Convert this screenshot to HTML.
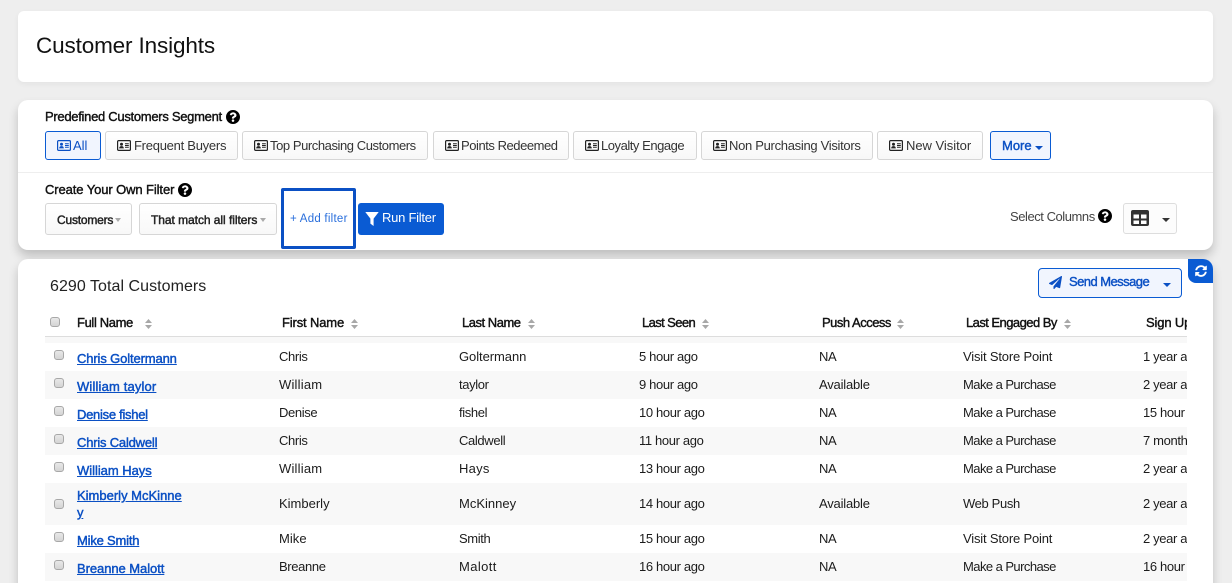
<!DOCTYPE html>
<html><head><meta charset="utf-8"><title>Customer Insights</title>
<style>
html,body{margin:0;padding:0;width:1232px;height:583px;overflow:hidden;background:#eee}
body{font-family:"Liberation Sans",Arial,sans-serif;color:#222;position:relative;font-size:13px}
.card{position:absolute;left:18px;width:1195px;background:#fff;border-radius:6px}
.t{position:absolute;white-space:nowrap;line-height:16px}
.m{-webkit-text-stroke:.4px currentColor}
.btn{position:absolute;box-sizing:border-box;top:131px;height:29px;border:1px solid #d6d6d6;border-radius:3px;background:linear-gradient(#fff,#f8f8f8);white-space:nowrap;line-height:27px;font-size:13px;color:#333}
.btn svg{position:absolute;left:11px;top:8px;width:14px;height:11px}
.btn span{position:absolute;top:0}
.on{border-color:#0a5bd3;background:#f1f5fe;color:#0b50c4}
.sel{position:absolute;box-sizing:border-box;top:203px;height:32px;border:1px solid #d6d6d6;border-radius:3px;background:linear-gradient(#fff,#f8f8f8);font-size:12px;line-height:33px;color:#222;white-space:nowrap;-webkit-text-stroke:.45px #222}
.caret{position:absolute;width:0;height:0;border-left:4px solid transparent;border-right:4px solid transparent;border-top:4px solid #333}
.sc{border-left-width:3.5px;border-right-width:3.5px;border-top-color:#aaa}
.h{position:absolute;top:315px;font-size:13px;line-height:16px;white-space:nowrap;color:#111;letter-spacing:-.15px;-webkit-text-stroke:.4px #111}
.h svg{position:absolute;top:4px;width:7px;height:10px}
.wrap{position:absolute;left:45px;top:310px;width:1142px;height:273px;overflow:hidden}
.r{position:absolute;left:0;width:1142px}
.g{background:#f8f8f8}
.c{position:absolute;white-space:nowrap;font-size:13px;line-height:16px;color:#1c1c1c;letter-spacing:-.36px;top:6px}
.a{position:absolute;left:32px;white-space:nowrap;font-size:13px;line-height:16px;color:#0b50c4;text-decoration:underline;letter-spacing:-.2px;-webkit-text-stroke:.45px #0b50c4;top:8px}
.cb{position:absolute;left:9px;box-sizing:border-box;width:10px;height:10px;border:1px solid #a8a8a8;border-radius:3px;background:linear-gradient(#e8e8e8,#d4d4d4);top:7px}
.q{position:absolute;width:14px;height:14px}
.c1{left:234px}.c2{left:414px}.c3{left:594px}.c4{left:774px}.c5{left:918px}.c6{left:1098px}
.mp{letter-spacing:-.56px}.vs{letter-spacing:-.18px}
</style></head><body>
<svg width="0" height="0" style="position:absolute">
<symbol id="id" viewBox="0 0 14 11"><rect x=".6" y=".6" width="12.8" height="9.8" rx="1" fill="none" stroke="currentColor" stroke-width="1.2"/><circle cx="4.5" cy="4.2" r="1.5" fill="currentColor"/><path d="M2.2 8.4c0-1.7 1-2.3 2.300-2.300s2.300.6 2.300 2.300z" fill="currentColor"/><path d="M8 3.800h3.800M8 5.500h3.800M8 7.200h3.800" stroke="currentColor" stroke-width="1"/></symbol>
<symbol id="q" viewBox="8 8 496 496"><path fill="#000" d="M504 256c0 136.997-111.043 248-248 248S8 392.997 8 256C8 119.083 119.043 8 256 8s248 111.083 248 248zM262.655 90c-54.497 0-89.255 22.957-116.549 63.758-3.536 5.286-2.353 12.415 2.715 16.258l34.699 26.31c5.205 3.947 12.621 3.008 16.665-2.122 17.864-22.658 30.113-35.797 57.303-35.797 20.429 0 45.698 13.148 45.698 32.958 0 14.976-12.363 22.667-32.534 33.976C247.128 238.528 216 254.941 216 296v4c0 6.627 5.373 12 12 12h56c6.627 0 12-5.373 12-12v-1.333c0-28.462 83.186-29.647 83.186-106.667 0-58.002-60.165-102-116.531-102zM256 338c-25.365 0-46 20.635-46 46 0 25.364 20.635 46 46 46s46-20.636 46-46c0-25.365-20.635-46-46-46z"/></symbol>
<symbol id="s" viewBox="0 0 7 10"><path d="M3.500 0L7 4H0zM3.500 10L0 6h7z" fill="#a8a8a8"/></symbol>
</svg>

<div class="card" style="top:11px;height:71px;box-shadow:0 2px 6px rgba(0,0,0,.05)"></div>
<div class="t" style="left:36px;top:32px;font-size:22.5px;line-height:28px;color:#111;letter-spacing:-.14px">Customer Insights</div>

<div class="card" style="top:100px;height:150px;border-radius:10px;box-shadow:0 6px 10px rgba(0,0,0,.2)"></div>
<div style="position:absolute;left:18px;top:172px;width:1195px;height:1px;background:#eee"></div>
<div class="t m" style="left:45px;top:109px;font-size:13px;color:#111;letter-spacing:-.29px">Predefined Customers Segment</div>
<svg class="q" style="left:226px;top:110px"><use href="#q"/></svg>

<div class="btn on" style="left:45px;width:56px"><svg style="color:#0b50c4"><use href="#id"/></svg><span style="left:27px">All</span></div>
<div class="btn" style="left:105px;width:133px"><svg style="color:#222"><use href="#id"/></svg><span style="left:28px;letter-spacing:-.26px">Frequent Buyers</span></div>
<div class="btn" style="left:242px;width:186px"><svg style="color:#222"><use href="#id"/></svg><span style="left:27px;letter-spacing:-.43px">Top Purchasing Customers</span></div>
<div class="btn" style="left:433px;width:136px"><svg style="color:#222"><use href="#id"/></svg><span style="left:27px;letter-spacing:-.45px">Points Redeemed</span></div>
<div class="btn" style="left:573px;width:124px"><svg style="color:#222"><use href="#id"/></svg><span style="left:27px;letter-spacing:-.46px">Loyalty Engage</span></div>
<div class="btn" style="left:701px;width:172px"><svg style="color:#222"><use href="#id"/></svg><span style="left:27px;letter-spacing:-.3px">Non Purchasing Visitors</span></div>
<div class="btn" style="left:877px;width:106px"><svg style="color:#222"><use href="#id"/></svg><span style="left:28px;letter-spacing:-.03px">New Visitor</span></div>
<div class="btn on m" style="left:990px;width:61px"><span style="left:11px">More</span><i class="caret" style="left:44px;top:14px;border-top-color:#0b50c4"></i></div>

<div class="t m" style="left:45px;top:182px;font-size:13px;color:#111;letter-spacing:-.1px">Create Your Own Filter</div>
<svg class="q" style="left:178px;top:183px"><use href="#q"/></svg>
<div class="sel" style="left:45px;width:87px"><span style="position:absolute;left:11px;letter-spacing:-.2px">Customers</span><i class="caret sc" style="left:69px;top:14px"></i></div>
<div class="sel" style="left:139px;width:138px"><span style="position:absolute;left:11px;letter-spacing:-.05px">That match all filters</span><i class="caret sc" style="left:120px;top:14px"></i></div>
<div style="position:absolute;box-sizing:border-box;left:281px;top:188px;width:75px;height:61px;border:3px solid #0b50c4;border-radius:2px;background:#fff"></div>
<div class="t" style="left:290px;top:211px;font-size:11.5px;color:#2a6fdc;letter-spacing:.25px">+ Add filter</div>
<div style="position:absolute;left:358px;top:203px;width:86px;height:32px;background:#0a5bd3;border-radius:3px"></div>
<svg style="position:absolute;left:365px;top:212px" width="14" height="14" viewBox="0 0 14 14"><path d="M.3 0h13.400L8.600 6.600V14L5.400 11.600V6.600z" fill="#fff"/></svg>
<div class="t" style="left:382px;top:210px;font-size:13px;color:#fff;letter-spacing:-.25px">Run Filter</div>

<div class="t" style="left:1010px;top:209px;font-size:13px;color:#444;letter-spacing:-.45px">Select Columns</div>
<svg class="q" style="left:1098px;top:209px"><use href="#q"/></svg>
<div style="position:absolute;box-sizing:border-box;left:1123px;top:203px;width:54px;height:31px;border:1px solid #ddd;border-radius:3px;background:#fcfcfc"></div>
<svg style="position:absolute;left:1131px;top:210px" width="18" height="16" viewBox="0 0 18 16"><rect width="18" height="16" rx="2" fill="#333"/><rect x="2.500" y="4.500" width="5.500" height="4" fill="#fff"/><rect x="10" y="4.500" width="5.500" height="4" fill="#fff"/><rect x="2.500" y="10.500" width="5.500" height="3.500" fill="#fff"/><rect x="10" y="10.500" width="5.500" height="3.500" fill="#fff"/></svg>
<i class="caret" style="left:1162px;top:218px"></i>

<div class="card" style="top:259px;height:340px;box-shadow:0 6px 10px rgba(0,0,0,.2);border-radius:10px 10px 0 0"></div>
<div class="t" style="left:50px;top:278px;font-size:16px;line-height:18px;color:#222;letter-spacing:.05px">6290 Total Customers</div>
<div style="position:absolute;box-sizing:border-box;left:1038px;top:268px;width:144px;height:30px;border:1px solid #0a5bd3;border-radius:4px;background:#f1f5fe"></div>
<svg style="position:absolute;left:1049px;top:276px" width="13" height="13" viewBox="0 0 512 512"><path fill="#0b50c4" d="M476 3.200L12.500 270.600c-18.100 10.400-15.800 35.600 2.200 43.200L121 358.400l287.300-253.200c5.500-4.900 13.300 2.600 8.600 8.300L176 407v80.500c0 23.600 28.500 32.900 42.500 15.800L282 426l124.600 52.200c14.200 6 30.400-2.900 33-18.200l72-432C515 7.800 493.300-6.800 476 3.200z"/></svg>
<div class="t m" style="left:1069px;top:274px;font-size:13px;color:#0b50c4;letter-spacing:-.55px">Send Message</div>
<i class="caret" style="left:1163px;top:283px;border-top-color:#0b50c4"></i>
<div style="position:absolute;left:1188px;top:259px;width:25px;height:24px;background:#0a5bd3;border-radius:0 10px 0 8px"></div>
<svg style="position:absolute;left:1195px;top:265px" width="12" height="12" viewBox="0 0 512 512"><path fill="#fff" d="M370.720 133.280C339.458 104.008 298.888 87.962 255.848 88c-77.458.068-144.328 53.178-162.791 126.850-1.344 5.363-6.122 9.150-11.651 9.150H24.103c-7.498 0-13.194-6.807-11.807-14.176C33.933 94.924 134.813 8 256 8c66.448 0 126.791 26.136 171.315 68.685L463.030 40.970C478.149 25.851 504 36.559 504 57.941V192c0 13.255-10.745 24-24 24H345.941c-21.382 0-32.090-25.851-16.971-40.971l41.750-41.749zM32 296h134.059c21.382 0 32.090 25.851 16.971 40.971l-41.750 41.750c31.262 29.273 71.835 45.319 114.876 45.280 77.418-.07 144.315-53.144 162.787-126.849 1.344-5.363 6.122-9.150 11.651-9.150h57.304c7.498 0 13.194 6.807 11.807 14.176C478.067 417.076 377.187 504 256 504c-66.448 0-126.791-26.136-171.315-68.685L48.970 471.030C33.851 486.149 8 475.441 8 454.059V320c0-13.255 10.745-24 24-24z"/></svg>

<div class="cb" style="left:50px;top:317px"></div>
<div class="h" style="left:77px;letter-spacing:-.37px">Full Name<svg style="left:68px"><use href="#s"/></svg></div>
<div class="h" style="left:282px">First Name<svg style="left:69px"><use href="#s"/></svg></div>
<div class="h" style="left:462px;letter-spacing:-.48px">Last Name<svg style="left:66px"><use href="#s"/></svg></div>
<div class="h" style="left:642px;letter-spacing:-.6px">Last Seen<svg style="left:60px"><use href="#s"/></svg></div>
<div class="h" style="left:822px;letter-spacing:-.5px">Push Access<svg style="left:75px"><use href="#s"/></svg></div>
<div class="h" style="left:966px;letter-spacing:-.55px">Last Engaged By<svg style="left:98px"><use href="#s"/></svg></div>
<div class="h" style="left:1146px;width:41px;overflow:hidden">Sign Up</div>

<div class="wrap">
<div class="r" style="top:26px;height:1px;background:#ddd"></div>
<div class="r g" style="top:27px;height:6px"></div>

<div class="r" style="top:33px;height:28px"><div class="cb"></div><a class="a" style="letter-spacing:-.13px">Chris Goltermann</a><div class="c c1">Chris</div><div class="c c2" style="letter-spacing:-.06px">Goltermann</div><div class="c c3">5 hour ago</div><div class="c c4">NA</div><div class="c c5 vs">Visit Store Point</div><div class="c c6">1 year ago</div></div>

<div class="r g" style="top:61px;height:28px"><div class="cb"></div><a class="a" style="letter-spacing:.15px">William taylor</a><div class="c c1" style="letter-spacing:.2px">William</div><div class="c c2">taylor</div><div class="c c3">9 hour ago</div><div class="c c4" style="letter-spacing:-.2px">Available</div><div class="c c5 mp">Make a Purchase</div><div class="c c6">2 year ago</div></div>

<div class="r" style="top:89px;height:28px"><div class="cb"></div><a class="a" style="letter-spacing:-.28px">Denise fishel</a><div class="c c1">Denise</div><div class="c c2">fishel</div><div class="c c3">10 hour ago</div><div class="c c4">NA</div><div class="c c5 mp">Make a Purchase</div><div class="c c6">15 hour ago</div></div>

<div class="r g" style="top:117px;height:28px"><div class="cb"></div><a class="a">Chris Caldwell</a><div class="c c1">Chris</div><div class="c c2">Caldwell</div><div class="c c3">11 hour ago</div><div class="c c4">NA</div><div class="c c5 mp">Make a Purchase</div><div class="c c6">7 month ago</div></div>

<div class="r" style="top:145px;height:28px"><div class="cb"></div><a class="a" style="letter-spacing:-.03px">William Hays</a><div class="c c1" style="letter-spacing:.2px">William</div><div class="c c2" style="letter-spacing:.24px">Hays</div><div class="c c3">13 hour ago</div><div class="c c4">NA</div><div class="c c5 mp">Make a Purchase</div><div class="c c6">2 year ago</div></div>

<div class="r g" style="top:173px;height:42px"><div class="cb" style="top:16px"></div><a class="a" style="top:5px;letter-spacing:0">Kimberly McKinne</a><a class="a" style="top:22px">y</a><div class="c c1" style="top:13px;letter-spacing:0">Kimberly</div><div class="c c2" style="top:13px;letter-spacing:0">McKinney</div><div class="c c3" style="top:13px">14 hour ago</div><div class="c c4" style="top:13px;letter-spacing:-.2px">Available</div><div class="c c5" style="top:13px">Web Push</div><div class="c c6" style="top:13px">2 year ago</div></div>

<div class="r" style="top:215px;height:28px"><div class="cb"></div><a class="a">Mike Smith</a><div class="c c1" style="letter-spacing:.04px">Mike</div><div class="c c2">Smith</div><div class="c c3">15 hour ago</div><div class="c c4">NA</div><div class="c c5 vs">Visit Store Point</div><div class="c c6">2 year ago</div></div>

<div class="r g" style="top:243px;height:28px"><div class="cb"></div><a class="a" style="letter-spacing:-.06px">Breanne Malott</a><div class="c c1">Breanne</div><div class="c c2" style="letter-spacing:.4px">Malott</div><div class="c c3">16 hour ago</div><div class="c c4">NA</div><div class="c c5 mp">Make a Purchase</div><div class="c c6">16 hour ago</div></div>
</div>
</body></html>
